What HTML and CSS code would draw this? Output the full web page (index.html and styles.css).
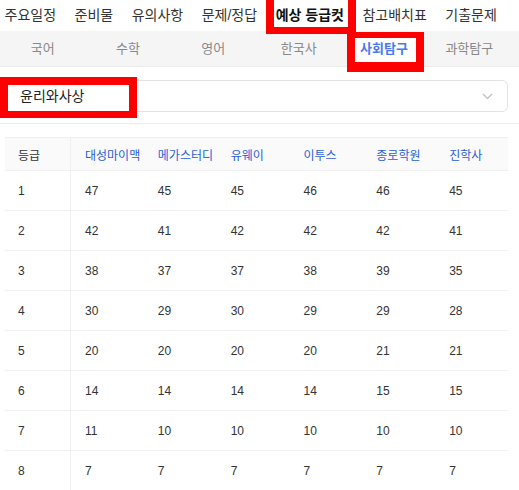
FILE: index.html
```html
<!DOCTYPE html>
<html lang="ko">
<head>
<meta charset="utf-8">
<title>예상 등급컷</title>
<link rel="stylesheet" href="styles.css">
</head>
<body>
<nav class="topnav">
  <a class="topnav-item">주요일정</a>
  <a class="topnav-item">준비물</a>
  <a class="topnav-item">유의사항</a>
  <a class="topnav-item">문제/정답</a>
  <a class="topnav-item topnav-item--active">예상 등급컷</a>
  <a class="topnav-item">참고배치표</a>
  <a class="topnav-item">기출문제</a>
</nav>
<nav class="subnav">
  <a class="subnav-item">국어</a>
  <a class="subnav-item">수학</a>
  <a class="subnav-item">영어</a>
  <a class="subnav-item">한국사</a>
  <a class="subnav-item subnav-item--active"><span class="subnav-label">사회탐구</span></a>
  <a class="subnav-item">과학탐구</a>
</nav>
<div class="select">
  <span class="select-value">윤리와사상</span>
  <svg class="select-chevron" width="11" height="7" viewBox="0 0 11 7"><polyline points="1,1 5.5,5.5 10,1" fill="none" stroke="#bdbdbd" stroke-width="1.2"/></svg>
</div>
<div class="divider"></div>
<table class="grades">
  <thead>
    <tr>
      <th class="col-grade">등급</th>
      <th class="col-org">대성마이맥</th>
      <th class="col-org">메가스터디</th>
      <th class="col-org">유웨이</th>
      <th class="col-org">이투스</th>
      <th class="col-org">종로학원</th>
      <th class="col-org">진학사</th>
    </tr>
  </thead>
  <tbody>
    <tr><td class="col-grade">1</td><td>47</td><td>45</td><td>45</td><td>46</td><td>46</td><td>45</td></tr>
    <tr><td class="col-grade">2</td><td>42</td><td>41</td><td>42</td><td>42</td><td>42</td><td>41</td></tr>
    <tr><td class="col-grade">3</td><td>38</td><td>37</td><td>37</td><td>38</td><td>39</td><td>35</td></tr>
    <tr><td class="col-grade">4</td><td>30</td><td>29</td><td>30</td><td>29</td><td>29</td><td>28</td></tr>
    <tr><td class="col-grade">5</td><td>20</td><td>20</td><td>20</td><td>20</td><td>21</td><td>21</td></tr>
    <tr><td class="col-grade">6</td><td>14</td><td>14</td><td>14</td><td>14</td><td>15</td><td>15</td></tr>
    <tr><td class="col-grade">7</td><td>11</td><td>10</td><td>10</td><td>10</td><td>10</td><td>10</td></tr>
    <tr><td class="col-grade">8</td><td>7</td><td>7</td><td>7</td><td>7</td><td>7</td><td>7</td></tr>
  </tbody>
</table>
</body>
</html>
```
FILE: styles.css
```css
* { box-sizing: border-box; }
html, body { margin: 0; padding: 0; background: #fff; }
body {
  font-family: "Liberation Sans", "Noto Sans CJK KR", sans-serif;
  color: #333;
  overflow: hidden;
}
a { text-decoration: none; color: inherit; }

.topnav {
  height: 31px;
  display: flex;
  align-items: center;
  gap: 18.5px;
  padding-left: 4.5px;
  font-size: 14px;
  color: #333;
  white-space: nowrap;
}
.topnav-item { position: relative; z-index: 0; line-height: 31px; }
.topnav-item--active { font-weight: bold; color: #111; }
.topnav-item--active::before {
  content: "";
  position: absolute;
  z-index: -1;
  left: -10px;
  right: -12px;
  top: -8px;
  bottom: -3px;
  background: #fff;
  border: 8px solid #ff0000;
  border-bottom-width: 7px;
}

.subnav {
  height: 36px;
  display: grid;
  grid-template-columns: repeat(6, 1fr);
  padding-right: 7px;
  background: #f5f5f5;
  border-bottom: 1px solid #ebebeb;
  font-size: 13px;
  color: #888;
}
.subnav-item {
  position: relative;
  z-index: 0;
  display: flex;
  align-items: center;
  justify-content: center;
  padding-bottom: 2px;
}
.subnav-item--active { color: #4a78f0; font-weight: bold; }
.subnav-item--active::before {
  content: "";
  position: absolute;
  z-index: -1;
  left: 6px;
  right: 3px;
  top: 1px;
  bottom: -6px;
  background: #fff;
  border: 8px solid #ff0000;
  border-top-width: 6px;
  border-bottom-width: 10px;
}

.select {
  margin: 13px 11px 0 0;
  height: 32px;
  border: 1px solid #e3e3e3;
  border-radius: 6px;
  display: flex;
  align-items: center;
  justify-content: space-between;
  padding: 0 14px 0 19px;
}
.select-value {
  position: relative;
  z-index: 0;
  font-size: 14px;
  line-height: 18px;
  color: #222;
}
.select-value::before {
  content: "";
  position: absolute;
  z-index: -1;
  left: -20px;
  right: -53px;
  top: -10px;
  bottom: -13px;
  background: #fff;
  border: 8px solid #ff0000;
  border-bottom-width: 7px;
}
.select-chevron { display: block; }

.divider {
  margin-top: 11px;
  height: 1px;
  background: #ececec;
}

.grades {
  margin: 13px 0 0 5px;
  width: 503px;
  table-layout: fixed;
  border-collapse: separate;
  border-spacing: 0;
  border-top: 1px solid #eeeeee;
  font-size: 12px;
}
.grades th, .grades td {
  text-align: left;
  padding: 0 0 0 14px;
  border-bottom: 1px solid #f0f0f0;
  white-space: nowrap;
}
.grades th {
  height: 33px;
  background: #fafafa;
  font-weight: normal;
  color: #2a5ed8;
}
.grades td { height: 40px; color: #333; }
.grades .col-grade {
  width: 66px;
  padding-left: 13px;
  border-right: 1px solid #f0f0f0;
  color: #333;
}
```
